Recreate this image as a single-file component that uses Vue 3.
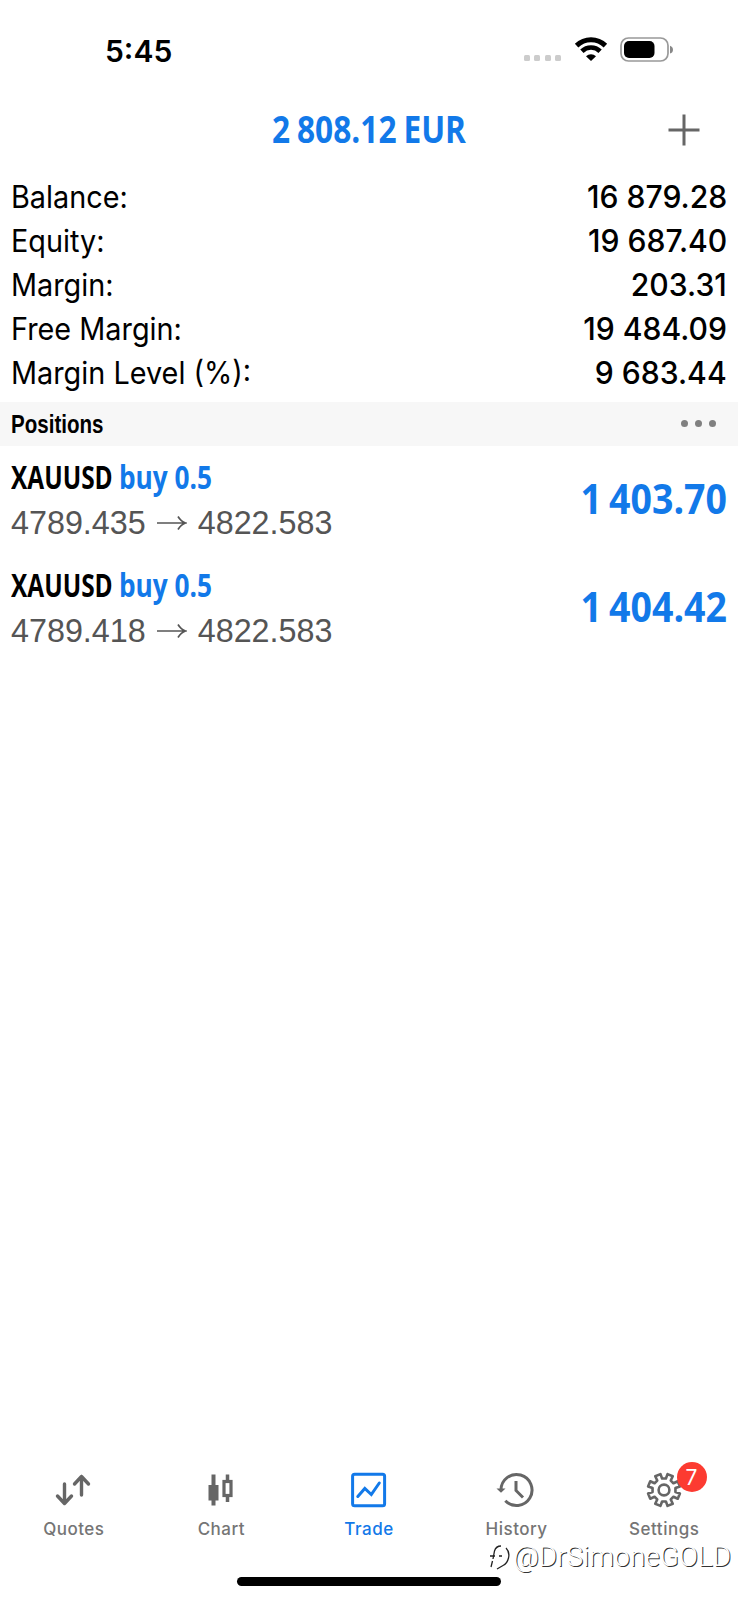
<script setup>
const summary = [
  { label: 'Balance:', value: '16 879.28' },
  { label: 'Equity:', value: '19 687.40' },
  { label: 'Margin:', value: '203.31' },
  { label: 'Free Margin:', value: '19 484.09' },
  { label: 'Margin Level (%):', value: '9 683.44' },
]
const positions = [
  { symbol: 'XAUUSD', side: 'buy 0.5', open: '4789.435', now: '4822.583', profit: '1 403.70' },
  { symbol: 'XAUUSD', side: 'buy 0.5', open: '4789.418', now: '4822.583', profit: '1 404.42' },
]
const teeth = 8
const gearPath = (() => {
  const pts = []
  for (let i = 0; i < teeth; i++) {
    const base = (i * 360) / teeth
    for (const [off, r] of [[-13, 11.6], [-10, 16.3], [10, 16.3], [13, 11.6]]) {
      const a = ((base + off + 22.5) * Math.PI) / 180
      pts.push(`${(18 + r * Math.cos(a)).toFixed(2)} ${(18 + r * Math.sin(a)).toFixed(2)}`)
    }
  }
  return `M${pts.join('L')}Z`
})()
</script>

<template>
  <div class="screen">
    <header class="status">
      <span class="time">5:45</span>
      <div class="indicators">
        <div class="signal"><i v-for="n in 4" :key="n"></i></div>
        <svg class="wifi" width="34" height="25" viewBox="0 0 34 25">
          <path d="M2.6 8.6A20.6 20.6 0 0 1 31.4 8.6" fill="none" stroke="#000" stroke-width="5" />
          <path d="M7.9 14.2A13 13 0 0 1 26.1 14.2" fill="none" stroke="#000" stroke-width="4.7" />
          <path d="M17 24L12 19.2A7.2 7.2 0 0 1 22 19.2Z" fill="#000" />
        </svg>
        <svg class="battery" width="54" height="26" viewBox="0 0 54 26">
          <rect x="1" y="1" width="47" height="23" rx="7.5" fill="none" stroke="#999" stroke-width="1.7" />
          <rect x="4" y="4" width="30.5" height="17" rx="5" fill="#000" />
          <path d="M50 8.8Q53 10 53 12.7Q53 15.500 50 16.600Z" fill="#888" />
        </svg>
      </div>
    </header>

    <div class="title">
      <span class="total">2 808.12 EUR</span>
      <svg class="plus" width="32" height="32" viewBox="0 0 32 32">
        <path d="M16 .5V31.500M.5 16H31.500" stroke="#666" stroke-width="3" />
      </svg>
    </div>

    <dl class="summary">
      <div v-for="row in summary" :key="row.label">
        <dt>{{ row.label }}</dt>
        <dd>{{ row.value }}</dd>
      </div>
    </dl>

    <div class="section">
      <span class="heading">Positions</span>
      <div class="more"><i v-for="n in 3" :key="n"></i></div>
    </div>

    <ul class="positions">
      <li v-for="p in positions" :key="p.open">
        <div>
          <div class="deal"><b>{{ p.symbol }}</b><span>{{ p.side }}</span></div>
          <div class="prices">
            <span>{{ p.open }}</span>
            <svg width="30" height="16" viewBox="0 0 30 16">
              <path d="M0 8H28.500M21 1.500Q24 6.500 28.500 8Q24 9.500 21 14.500" fill="none" stroke="#555" stroke-width="1.7" />
            </svg>
            <span>{{ p.now }}</span>
          </div>
        </div>
        <span class="profit">{{ p.profit }}</span>
      </li>
    </ul>

    <nav class="tabs">
      <div class="tab">
        <svg width="36" height="36" viewBox="2 0 36 36" fill="none" stroke="#666" stroke-width="3.400" stroke-linecap="round" stroke-linejoin="round">
          <path d="M10.500 12V31M3.500 24L10.500 31.500L17.500 24M27.500 23V4.500M20.500 12L27.500 4.500L34.500 12" />
        </svg>
        <span>Quotes</span>
      </div>
      <div class="tab">
        <svg width="36" height="36" viewBox="1 0 36 36">
          <path d="M9.500 2.500H13.500V13H16.500V28.500H13.500V33.500H9.500V28.500H6.500V13H9.500Z" fill="#666" />
          <path d="M25.500 2.500V8M25.500 25V30" stroke="#666" stroke-width="3.500" />
          <rect x="22" y="9.500" width="7" height="14" fill="none" stroke="#666" stroke-width="3.200" />
        </svg>
        <span>Chart</span>
      </div>
      <div class="tab active">
        <svg width="36" height="36" viewBox=".7 0 36 36" fill="none" stroke="#1279e9">
          <rect x="2.300" y="2.300" width="32" height="31.500" rx="2" stroke-width="3" />
          <path d="M7.500 24.500L14.500 16.500L21 22.500L29 11" stroke-width="3" stroke-linecap="round" />
        </svg>
        <span>Trade</span>
      </div>
      <div class="tab">
        <svg width="36" height="36" viewBox="2 0 36 36" fill="none" stroke="#666" stroke-width="3">
          <path d="M4 18A15.500 15.500 0 1 1 8.300 28.700" />
          <path d="M19 9V18.500L26 25.500" />
          <path d="M-.5 16.500H8.500L4 20.800Z" fill="#666" stroke="none" />
        </svg>
        <span>History</span>
      </div>
      <div class="tab">
        <div class="gear">
          <svg width="36" height="36" viewBox="0 0 36 36" fill="none" stroke="#666" stroke-width="2.600" stroke-linejoin="round">
            <path :d="gearPath" />
            <circle cx="18" cy="18" r="5.400" />
          </svg>
          <em>7</em>
        </div>
        <span>Settings</span>
      </div>
    </nav>
    <div class="home"></div>
    <div class="watermark">
      <svg width="23" height="27" viewBox="0 0 23 27" fill="none">
        <path d="M5 15L6.500 7Q8 2 13 2M2 12H7M11 12H14M4.500 17L3 23M18 4Q22 8 20.500 14Q19 20 15 21.500L9 25" stroke="#222" stroke-width="1.300" />
      </svg>
      <span>@DrSimoneGOLD</span>
    </div>
  </div>
</template>

<style>
body { margin: 0; background: #fff; }
</style>

<style scoped>
.screen {
  position: relative;
  box-sizing: border-box;
  width: 738px;
  height: 1600px;
  display: flex;
  flex-direction: column;
  overflow: hidden;
  background: #fff;
  color: #000;
  font-family: Inter, "Liberation Sans", sans-serif;
}
.status { display: flex; justify-content: space-between; height: 102px; }
.time { padding: 31px 0 0 105px; font-size: 30px; font-weight: 600; line-height: 40px; }
.indicators { display: flex; align-items: flex-start; padding: 37px 64px 0 0; }
.signal { display: flex; gap: 4.400px; margin: 18px 13px 0 0; }
.signal i { width: 6px; height: 6px; border-radius: 1.500px; background: #ccc; }
.wifi { margin-right: 12px; }
.title { display: flex; justify-content: space-between; align-items: center; height: 56px; padding: 0 38px 0 272px; }
.total, .deal, .profit { font-family: "Open Sans", "Noto Sans", sans-serif; font-weight: 700; white-space: nowrap; }
.total { font-size: 37px; line-height: 54px; margin-top: -3px; color: #1279e9; word-spacing: -1.500px; transform: scaleX(.855); transform-origin: left; }
.summary { margin: 17px 0 0; }
.summary div { display: flex; justify-content: space-between; padding: 0 11px; font-size: 31px; line-height: 44px; }
.summary dt { transform: scaleX(.93); transform-origin: left; white-space: nowrap; }
.summary dd { margin: 0; font-weight: 500; transform: scaleX(.972); transform-origin: right; }
.section { display: flex; align-items: center; justify-content: space-between; height: 44px; margin-top: 7px; padding: 0 22px 0 11px; background: #f7f7f7; }
.heading { font: bold 26px/44px "Liberation Sans", sans-serif; transform: scaleX(.79); transform-origin: left; }
.more { display: flex; gap: 7px; margin-top: -1px; }
.more i { width: 7px; height: 7px; border-radius: 50%; background: #808080; }
.positions { list-style: none; margin: 0; padding: 0; }
.positions li { display: flex; justify-content: space-between; height: 108px; padding: 0 11px; }
.deal { display: flex; height: 49px; padding-top: 6px; box-sizing: border-box; font-size: 32px; line-height: 50px; }
.deal b { width: 108px; font-weight: 700; transform: scaleX(.764); transform-origin: left; }
.deal span { color: #1279e9; transform: scaleX(.82); transform-origin: left; }
.prices { display: flex; align-items: center; gap: 11px; margin-top: 8px; font: 32.300px/40px "Liberation Sans", sans-serif; color: #555; }
.profit { font-size: 42px; line-height: 103px; color: #1279e9; word-spacing: -3px; transform: scaleX(.893); transform-origin: right; }
.tabs { display: grid; grid-template-columns: repeat(5, 1fr); margin-top: auto; padding-bottom: 36px; }
.tab { display: flex; flex-direction: column; align-items: center; height: 92px; color: #757575; font-size: 17px; font-weight: 500; letter-spacing: .5px; line-height: 24px; }
.tab svg { display: block; margin-bottom: 9px; overflow: visible; }
.tab.active { color: #1279e9; }
.gear { position: relative; }
.gear em { position: absolute; left: 30.500px; top: -10px; width: 30px; height: 30px; border-radius: 50%; background: #fc3b31; color: #fff; font: 21px/31px Inter, sans-serif; text-align: center; }
.home { position: absolute; left: 237px; bottom: 14px; width: 264px; height: 9px; border-radius: 5px; background: #000; }
.watermark { position: absolute; right: 7px; bottom: 29px; display: flex; align-items: center; gap: 2px; height: 28px; }
.watermark span { color: #fff; font: 300 28px/28px Roboto, sans-serif; text-shadow: 1px 1px 0 #333; }
</style>
